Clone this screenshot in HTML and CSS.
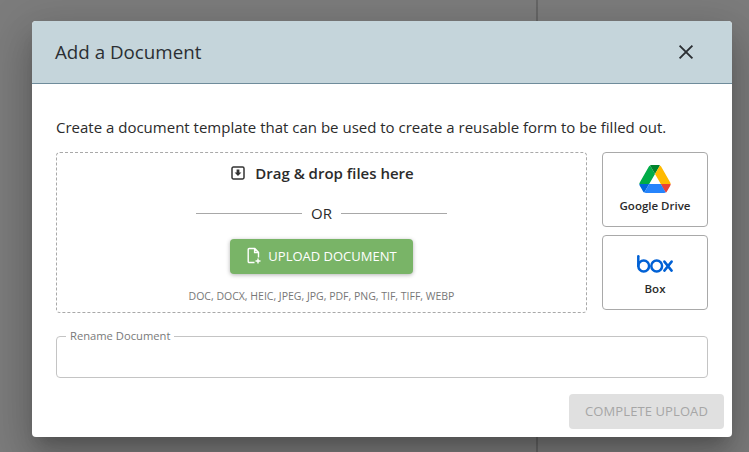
FILE: index.html
```html
<!DOCTYPE html>
<html lang="en">
<head>
<meta charset="utf-8">
<title>Add a Document</title>
<link rel="stylesheet" href="styles.css">
</head>
<body>
<div class="backdrop">
  <div class="backdrop-left"></div>
  <div class="backdrop-right"></div>
</div>
<div class="overlay">
  <section class="modal">
    <header class="modal-header">
      <h1 class="modal-title">Add a Document</h1>
      <svg class="close" width="16" height="16" viewBox="0 0 16 16"><path d="M1.6 1.6 14.4 14.4M14.4 1.6 1.6 14.4" stroke="#2b2f33" stroke-width="1.9" fill="none"/></svg>
    </header>
    <div class="modal-body">
      <p class="intro">Create a document template that can be used to create a reusable form to be filled out.</p>
      <div class="upload-row">
        <div class="dropzone">
          <div class="drag">
            <svg class="drag-icon" width="14" height="14" viewBox="0 0 14 14"><rect x="1" y="1" width="12" height="12" rx="1.4" fill="none" stroke="#333" stroke-width="1.5"/><path d="M5.6 3.4h2.8v3h2L7 10 3.6 6.4h2z" fill="#333"/></svg>
            <span>Drag &amp; drop files here</span>
          </div>
          <div class="or"><span class="or-line"></span><span>OR</span><span class="or-line"></span></div>
          <button class="upload-btn" type="button">
            <svg width="16" height="18" viewBox="0 0 16 18"><path d="M8.5 15.5H3.2a1 1 0 0 1-1-1V2.5a1 1 0 0 1 1-1h5.6l3.7 3.9v5.1M8.6 1.6v3.9h3.9M12 11.5v5M9.5 14h5" fill="none" stroke="#fff" stroke-width="1.4"/></svg>
            <span>UPLOAD DOCUMENT</span>
          </button>
          <div class="formats">DOC, DOCX, HEIC, JPEG, JPG, PDF, PNG, TIF, TIFF, WEBP</div>
        </div>
        <div class="sources">
          <button class="source" type="button">
            <svg class="drive" width="32" height="28" viewBox="0 0 87.3 78"><path d="m6.6 66.85 3.85 6.65c.8 1.4 1.95 2.5 3.3 3.3l13.75-23.8H0c0 1.55.4 3.1 1.2 4.5z" fill="#0066da"/><path d="M43.65 25 29.9 1.2c-1.35.8-2.5 1.9-3.3 3.3L1.2 48.5A9 9 0 0 0 0 53h27.5z" fill="#00ac47"/><path d="M73.55 76.8c1.35-.8 2.5-1.9 3.3-3.3l1.6-2.75 7.65-13.25c.8-1.4 1.2-2.95 1.2-4.5H59.8l5.85 11.5z" fill="#ea4335"/><path d="M43.65 25 57.4 1.2C56.05.4 54.5 0 52.9 0H34.4c-1.6 0-3.15.45-4.5 1.2z" fill="#00832d"/><path d="M59.8 53H27.5L13.75 76.8c1.35.8 2.9 1.2 4.5 1.2h50.8c1.6 0 3.15-.45 4.5-1.2z" fill="#2684fc"/><path d="M73.4 26.5 60.7 4.5c-.8-1.4-1.95-2.5-3.3-3.3L43.65 25 59.8 53h27.45c0-1.55-.4-3.1-1.2-4.5z" fill="#ffba00"/></svg>
            <span>Google Drive</span>
          </button>
          <button class="source" type="button">
            <svg class="box" width="36" height="18" viewBox="0 0 36 18"><g fill="none" stroke="#0061d5" stroke-width="2.5" stroke-linecap="round"><path d="M1.3 1.3v9.7"/><circle cx="6.7" cy="11" r="5.4"/><circle cx="19.7" cy="11" r="5.4"/><path d="m27.4 6.6 7.2 9M34.6 6.6l-7.2 9"/></g></svg>
            <span>Box</span>
          </button>
        </div>
      </div>
      <fieldset class="rename">
        <legend>Rename Document</legend>
      </fieldset>
      <div class="actions">
        <button class="complete" type="button" disabled>COMPLETE UPLOAD</button>
      </div>
    </div>
  </section>
</div>
</body>
</html>
```

FILE: styles.css
```css
* { box-sizing: border-box; }
html, body { margin: 0; height: 100%; overflow: hidden; }
body { font-family: "Open Sans", "Liberation Sans", sans-serif; color: #2b2f33; background: #777; }

.backdrop { display: flex; height: 100%; }
.backdrop-left { width: 538px; background: #7c7c7c; border-right: 2px solid #666; }
.backdrop-right { flex: 1; background: #7c7c7c; }

.overlay { position: absolute; inset: 0; padding: 21px 17px 15px 32px; }

.modal {
  width: 700px; height: 416px;
  background: #fff; border-radius: 4px; overflow: hidden;
  box-shadow: 0 11px 15px -7px rgba(0,0,0,.2), 0 24px 38px 3px rgba(0,0,0,.14), 0 9px 46px 8px rgba(0,0,0,.12);
}

.modal-header {
  height: 63px; display: flex; align-items: center; justify-content: space-between;
  padding: 0 38px 1px 23px;
  background: #c5d5db; border-bottom: 1px solid #6f8c9b;
}
.modal-title { margin: 0; font-size: 18.75px; font-weight: 400; line-height: 24px; }

.modal-body { padding: 33px 24px 0; }
.intro { margin: 0 0 15px; font-size: 15px; line-height: 20px; color: #2b2b2b; }

.upload-row { display: flex; justify-content: space-between; }

.dropzone {
  width: 531px; height: 161px;
  border: 1px dashed #a9a9a9; border-radius: 4px;
  display: flex; flex-direction: column; align-items: center;
  padding-top: 9px;
}
.drag { display: flex; align-items: center; gap: 10px; height: 22px; padding-left: 2px; font-size: 15px; font-weight: 600; color: #2b2b2b; }
.drag-icon { display: block; }

.or { display: flex; align-items: center; gap: 9px; margin-top: 19px; height: 20px; font-size: 15px; color: #2b2b2b; }
.or-line { width: 106px; height: 1px; background: #a8a8a8; }

.upload-btn {
  margin-top: 16px; width: 183px; height: 35px; padding: 0 0 2px;
  display: flex; align-items: center; justify-content: center; gap: 6px;
  background: #79b467; color: #fff; border: 0; border-radius: 4px;
  font-family: inherit; font-size: 13px; font-weight: 400;
  box-shadow: 0 1px 4px rgba(0,0,0,.3);
}

.formats { margin-top: 15px; font-size: 10.5px; line-height: 14px; color: #777; }

.sources { width: 106px; display: flex; flex-direction: column; gap: 8px; }
.source {
  height: 75px; padding: 12px 0 0;
  display: flex; flex-direction: column; align-items: center; justify-content: flex-start; gap: 5px;
  background: #fff; border: 1px solid #a9a9a9; border-radius: 4px;
  font-family: inherit; font-size: 11.5px; font-weight: 600; color: #2b2b2b;
}
.source span { line-height: 16px; }
.box { margin: 7px 0 3px; }

.rename {
  margin: 16px 0 0; padding: 0 9px; height: 49px;
  border: 1px solid #c4c4c4; border-radius: 4px;
}
.rename legend { padding: 0 4px; font-size: 11.2px; line-height: 14px; color: #7a7a7a; }

.actions { display: flex; justify-content: flex-end; margin: 16px -16px 0 0; }
.complete {
  width: 155px; height: 35px; padding: 0 0 2px; border: 0; border-radius: 4px;
  background: #e0e0e0; color: #a6a6a6;
  font-family: inherit; font-size: 13px; letter-spacing: .1px;
}
```
